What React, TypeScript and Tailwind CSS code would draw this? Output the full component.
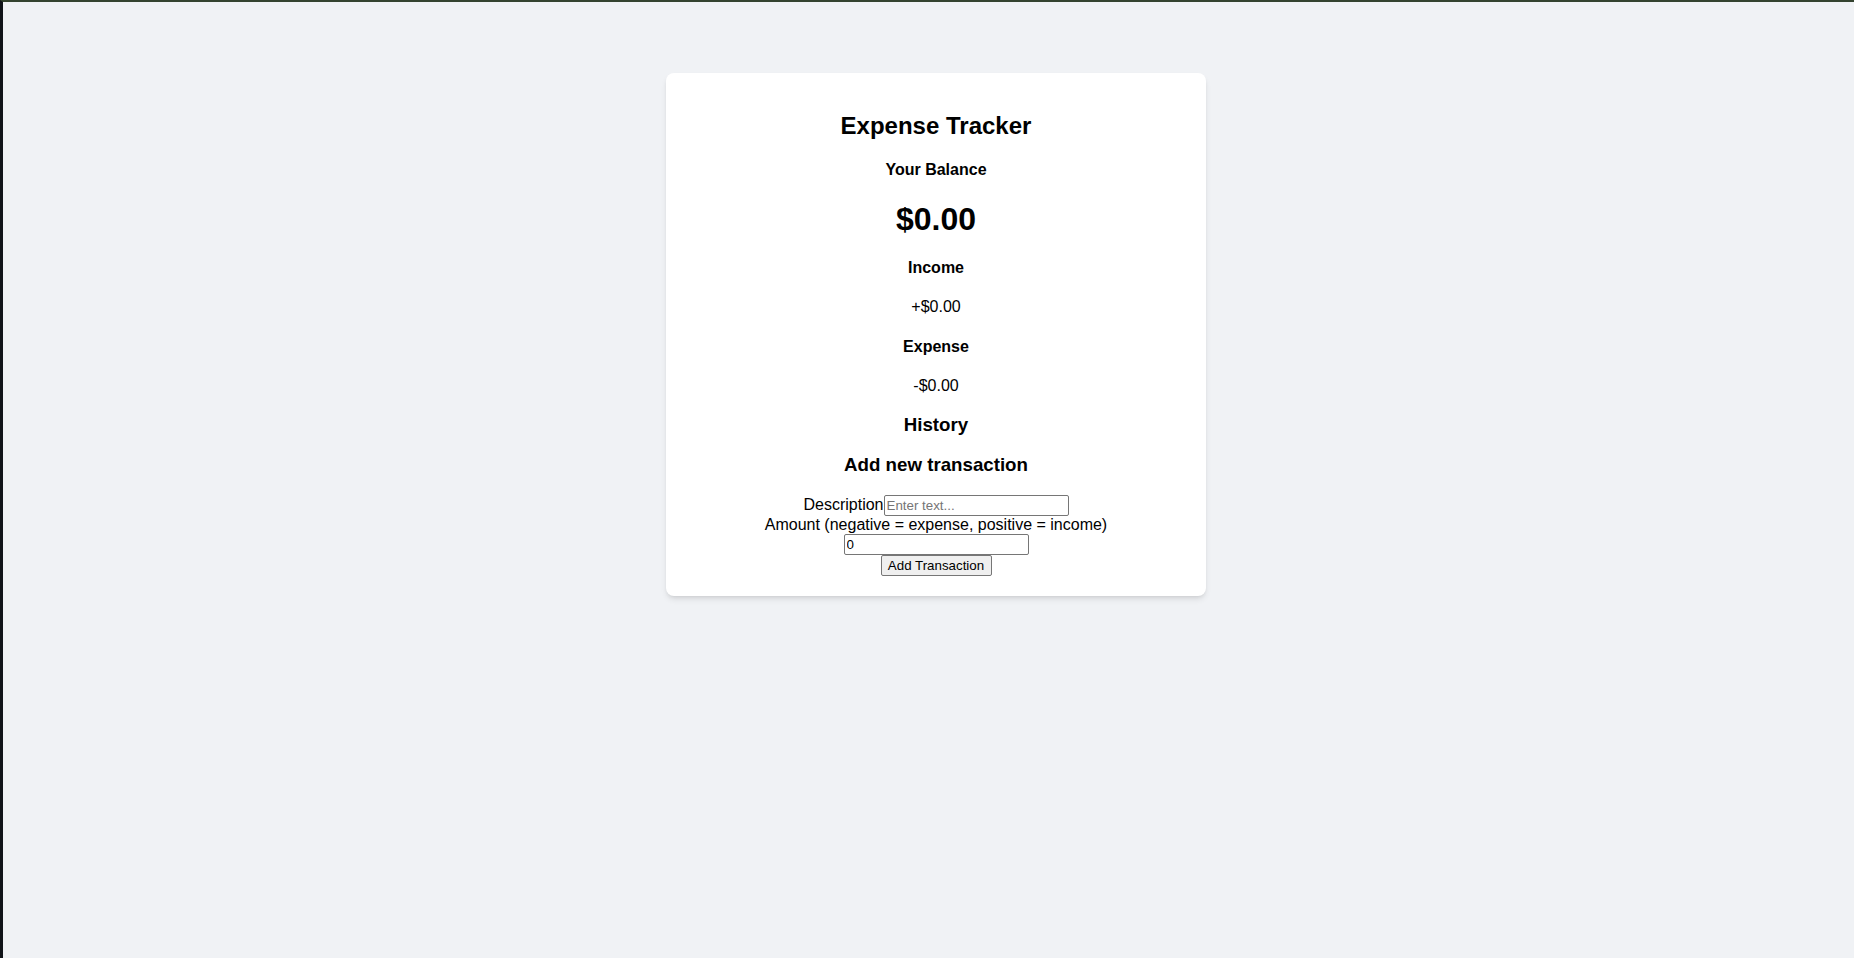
import React from 'react';

export default function App() {
  return (
    <div className="min-h-screen bg-[#f0f2f5] border-t-2 border-t-[#34432f] border-l-[3px] border-l-[#101318] pt-[71px] pl-[15px] flex justify-center items-start font-['Liberation_Sans',Arial,sans-serif] text-black leading-[normal]">
      <div className="w-[540px] bg-white rounded-lg shadow-md px-5 pt-5 pb-5 text-center">
        {/* Header */}
        <h2 className="mt-[19px] text-2xl font-bold leading-[normal]">Expense Tracker</h2>

        {/* Balance */}
        <h4 className="mt-[21px] font-bold">Your Balance</h4>
        <h1 className="mt-[22px] text-[32px] font-bold leading-[normal]">$0.00</h1>

        {/* Income / expense */}
        <h4 className="mt-[21px] font-bold">Income</h4>
        <p className="mt-[21px]">+$0.00</p>
        <h4 className="mt-[22px] font-bold">Expense</h4>
        <p className="mt-[21px]">-$0.00</p>

        {/* History */}
        <h3 className="mt-[19px] text-[18.72px] font-bold leading-[normal]">History</h3>

        {/* Form */}
        <h3 className="mt-[18px] text-[18.72px] font-bold leading-[normal]">Add new transaction</h3>
        <form className="mt-[19px]" onSubmit={(e) => e.preventDefault()}>
          <div>
            <label htmlFor="text">Description</label>
            <input
              id="text"
              type="text"
              placeholder="Enter text..."
              className="w-[185px] h-[21px] align-baseline border border-[#767676] rounded-[2px] px-[2px] py-[1px] text-[13.33px] font-['Liberation_Sans',Arial,sans-serif] placeholder:text-[#757575]"
            />
          </div>
          <div>
            <label htmlFor="amount">Amount (negative = expense, positive = income)</label>
            <input
              id="amount"
              type="number"
              defaultValue={0}
              className="w-[185px] h-[21px] align-baseline border border-[#767676] rounded-[2px] px-[2px] py-[1px] text-[13.33px] font-['Liberation_Sans',Arial,sans-serif]"
            />
          </div>
          <button className="w-[111px] h-[21px] bg-[#efefef] border border-[#767676] rounded-[2px] px-[6px] text-[13.33px] font-['Liberation_Sans',Arial,sans-serif] leading-[normal]">
            Add Transaction
          </button>
        </form>
      </div>
    </div>
  );
}
